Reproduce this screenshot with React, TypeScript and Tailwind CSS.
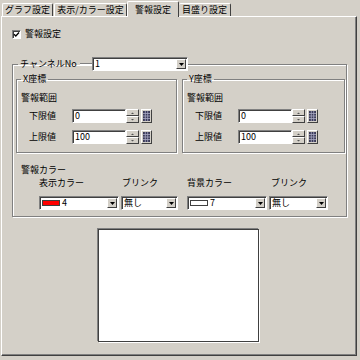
const sunken =
  "border border-t-[#808080] border-l-[#808080] border-r-white border-b-white shadow-[inset_1px_1px_0_#404040] bg-white";
const raised =
  "bg-[#d4d0c8] border border-t-white border-l-white border-r-[#404040] border-b-[#404040]";
const group =
  "border border-[#808080] shadow-[inset_1px_1px_0_#fff,1px_1px_0_#fff]";

const DropButton = () => (
  <div className={`${raised} w-[10px] h-[10px] mr-px flex items-center justify-center`}>
    <svg width="5" height="3" viewBox="0 0 5 3">
      <path d="M0 0H5L2.5 3Z" fill="#000" />
    </svg>
  </div>
);

const Combo = ({ className, children }: { className: string; children: React.ReactNode }) => (
  <div className={`${sunken} ${className} h-[14px] flex items-center`}>
    <div className="flex-1 flex items-center pl-[2px] leading-[12px]">{children}</div>
    <DropButton />
  </div>
);

const Spin = () => (
  <div className="flex flex-col w-[13px] h-[14px]">
    <div className={`${raised} h-[7px] flex items-center justify-center`}>
      <svg width="5" height="2" viewBox="0 0 5 2">
        <path d="M1 2L2.5 0.5L4 2Z" fill="#555" />
      </svg>
    </div>
    <div className={`${raised} h-[7px] flex items-center justify-center`}>
      <svg width="5" height="2" viewBox="0 0 5 2">
        <path d="M1 0L2.5 1.5L4 0Z" fill="#555" />
      </svg>
    </div>
  </div>
);

// 範囲入力ボタンのグリッドアイコン
const GridButton = () => (
  <div className={`${raised} w-[11px] h-[14px] ml-[2px] flex items-center justify-center`}>
    <svg width="7" height="10" viewBox="0 0 7 10">
      <rect x="0" y="0" width="7" height="10" fill="#3a3a58" />
      <path d="M0 2.5H7M0 5H7M0 7.5H7M2.3 0V10M4.7 0V10" stroke="#a8a8c4" strokeWidth="0.8" />
    </svg>
  </div>
);

const RangeRow = ({ label, value, top }: { label: string; value: string; top: string }) => (
  <div className={`flex items-center h-[14px] ml-[12px] ${top}`}>
    <span className="w-[43px] leading-[12px]">{label}</span>
    <div className={`${sunken} w-[54px] h-[14px] pl-[2px] flex items-center leading-[12px]`}>{value}</div>
    <Spin />
    <GridButton />
  </div>
);

const AxisGroup = ({ title, className }: { title: string; className: string }) => (
  <fieldset className={`${group} ${className} pb-[8px]`}>
    <legend className="ml-[4px] px-[2px] leading-[12px]">{title}</legend>
    <p className="ml-[4px] mt-[7px] leading-[12px]">警報範囲</p>
    <RangeRow label="下限値" value="0" top="mt-[5px]" />
    <RangeRow label="上限値" value="100" top="mt-[7px]" />
  </fieldset>
);

const App = () => {
  return (
    <div className="w-[360px] h-[360px] bg-[#d4d0c8] overflow-hidden text-[9px] text-black font-['Noto_Sans_CJK_JP',sans-serif]">
      {/* タブ */}
      <div className="flex items-end h-[16px] pl-[2px] relative z-10">
        <div className="w-[51px] h-[13px] border-t border-l border-r border-white border-r-[#404040] rounded-t-[2px] flex justify-center leading-[12px]">
          グラフ設定
        </div>
        <div className="w-[73px] ml-px h-[13px] border-t border-l border-r border-white border-r-[#404040] rounded-t-[2px] flex justify-center leading-[12px]">
          表示/カラー設定
        </div>
        <div className="w-[52px] h-[16px] -mb-px bg-[#d4d0c8] border-t border-l border-r border-white border-r-[#404040] rounded-t-[2px] flex justify-center pt-[2px] leading-[12px]">
          警報設定
        </div>
        <div className="w-[52px] h-[13px] border-t border-r border-white border-r-[#404040] rounded-t-[2px] flex justify-center leading-[12px]">
          目盛り設定
        </div>
      </div>

      {/* パネル */}
      <div className="ml-px w-[356px] h-[340px] border border-t-white border-l-white border-r-[#404040] border-b-[#404040] shadow-[inset_-1px_-1px_0_#808080]">
        <div className="flex items-center h-[12px] mt-[11px] ml-[10px] gap-[4px]">
          <div className={`${sunken} w-[9px] h-[9px] flex items-center justify-center`}>
            <svg width="7" height="7" viewBox="0 0 7 7">
              <path d="M1 3.2L2.8 5L6 1.5" stroke="#000" strokeWidth="1.3" fill="none" />
            </svg>
          </div>
          <span className="leading-[12px]">警報設定</span>
        </div>

        <fieldset className={`${group} ml-[10px] mt-[17px] w-[335px] pb-[6px]`}>
          <legend className="ml-[5px] flex items-center h-[14px]">
            <span className="flex items-center w-[74px]">
              <span className="pl-[2px] whitespace-nowrap leading-[12px]">チャンネルNo</span>
              <span className="flex-1 ml-[3px] h-[2px] border-t border-t-[#808080] border-b border-b-white" />
            </span>
            <Combo className="w-[96px]">1</Combo>
          </legend>

          <div className="flex mt-[2px] ml-[3px]">
            <AxisGroup title="X座標" className="w-[161px]" />
            <AxisGroup title="Y座標" className="w-[163px] ml-[5px]" />
          </div>

          <p className="ml-[8px] mt-[11px] leading-[12px]">警報カラー</p>
          <div className="flex mt-px ml-[26px]">
            <div className="flex flex-col w-[80px]">
              <span className="leading-[12px]">表示カラー</span>
              <Combo className="w-[80px] mt-[7px]">
                <span className="w-[18px] h-[6px] bg-[#ff0000] border border-[#404040] mr-[2px]" />
                4
              </Combo>
            </div>
            <div className="flex flex-col w-[57px] ml-[2px]">
              <span className="leading-[12px] pl-px">ブリンク</span>
              <Combo className="w-[57px] mt-[7px]">無し</Combo>
            </div>
            <div className="flex flex-col w-[80px] ml-[9px]">
              <span className="leading-[12px]">背景カラー</span>
              <Combo className="w-[80px] mt-[7px]">
                <span className="w-[18px] h-[6px] bg-white border border-[#404040] mr-[2px]" />
                7
              </Combo>
            </div>
            <div className="flex flex-col w-[59px] ml-[2px]">
              <span className="leading-[12px] pl-[2px]">ブリンク</span>
              <Combo className="w-[59px] mt-[7px]">無し</Combo>
            </div>
          </div>
        </fieldset>

        {/* プレビュー */}
        <div className="ml-[96px] mt-[12px] w-[161px] h-[113px] bg-white border border-[#404040] shadow-[-1px_-1px_0_#808080,1px_1px_0_#fff]" />
      </div>
    </div>
  );
};

export default App;
